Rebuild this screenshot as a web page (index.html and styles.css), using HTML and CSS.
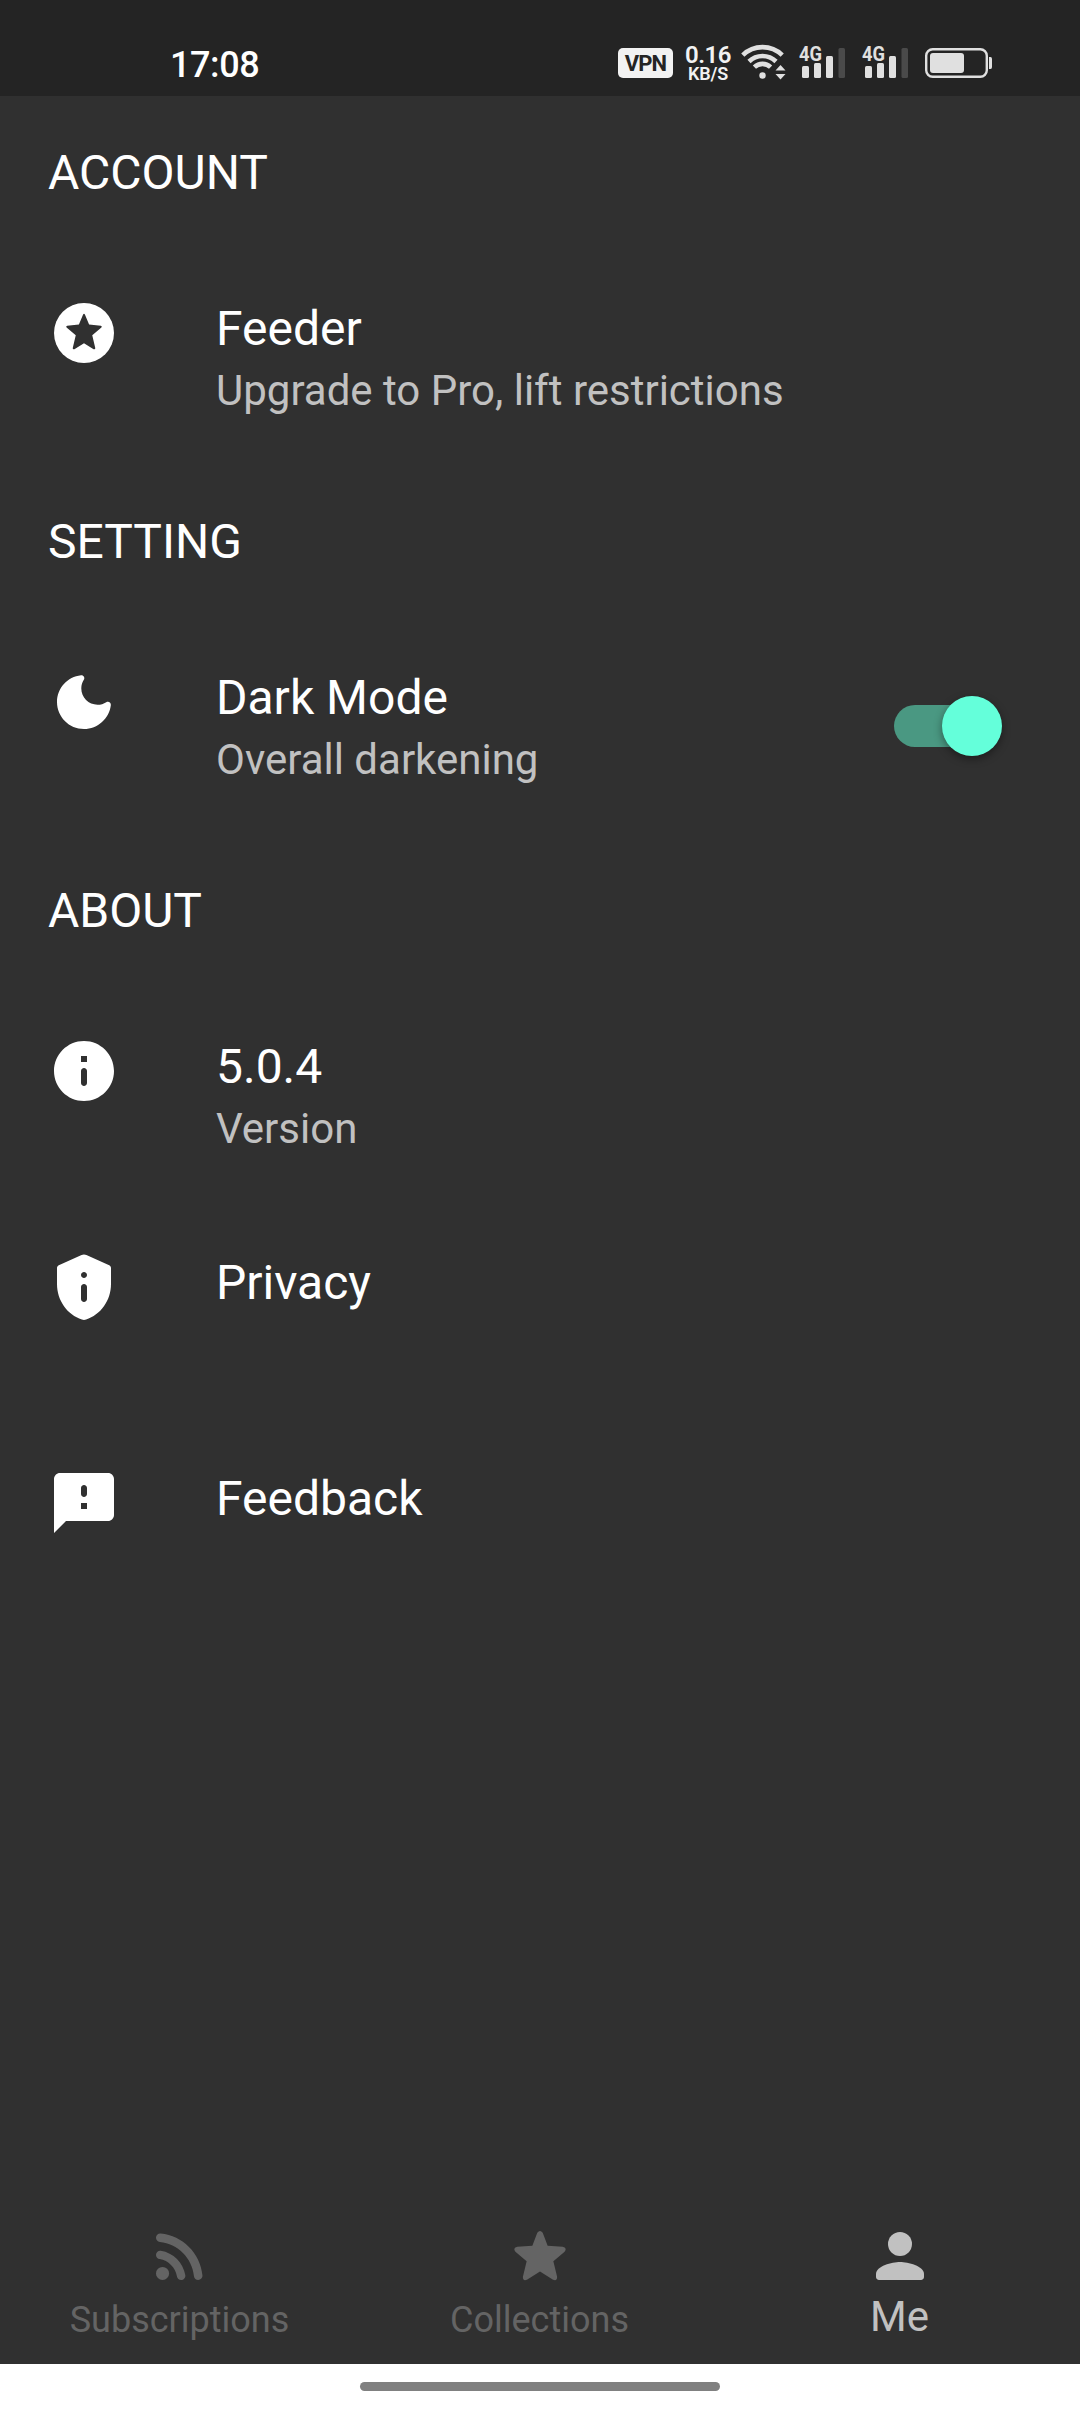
FILE: index.html
```html
<!DOCTYPE html>
<html lang="en">
<head>
<meta charset="utf-8">
<title>Feeder</title>
<link rel="stylesheet" href="styles.css">
</head>
<body>
<div class="screen">
  <header class="status">
    <span class="clock">17:08</span>
    <div class="indicators">
      <span class="vpn">VPN</span>
      <div class="speed"><span class="rate">0.16</span><span class="unit">KB/S</span></div>
      <svg class="wifi" width="46" height="40" viewBox="0 0 46 40">
        <g fill="none" stroke="#e0e0e0" stroke-width="4.600">
          <path d="M1.800 12.100A28.300 28.300 0 0 1 41.200 12.100"/>
          <path d="M8 18.500A19.500 19.500 0 0 1 35 18.500"/>
          <path d="M13.400 24.100A11.700 11.700 0 0 1 29.600 24.100"/>
        </g>
        <circle cx="21.500" cy="32.500" r="3.200" fill="#e0e0e0"/>
        <path fill="#e0e0e0" d="M34.500 27.500l5-5.500 5 5.500zM34.500 31h10l-5 5.500z"/>
      </svg>
      <svg class="signal" width="48" height="40" viewBox="0 0 48 40">
        <text class="net" x="0" y="18" textLength="23" lengthAdjust="spacingAndGlyphs">4G</text>
        <g fill="#e0e0e0">
          <rect x="3" y="23" width="7" height="12" rx="1.500"/>
          <rect x="15" y="20" width="7" height="15" rx="1.500"/>
          <rect x="27" y="13" width="7" height="22" rx="1.500"/>
        </g>
        <rect x="39.500" y="5" width="6.500" height="30" rx="1.500" fill="#4a4a4a"/>
      </svg>
      <svg class="signal second" width="48" height="40" viewBox="0 0 48 40">
        <text class="net" x="0" y="18" textLength="23" lengthAdjust="spacingAndGlyphs">4G</text>
        <g fill="#e0e0e0">
          <rect x="3" y="23" width="7" height="12" rx="1.500"/>
          <rect x="15" y="20" width="7" height="15" rx="1.500"/>
          <rect x="27" y="13" width="7" height="22" rx="1.500"/>
        </g>
        <rect x="39.500" y="5" width="6.500" height="30" rx="1.500" fill="#4a4a4a"/>
      </svg>
      <svg class="battery" width="68" height="40" viewBox="0 0 68 40">
        <rect x="2.200" y="6.200" width="60.600" height="27.600" rx="6.500" fill="none" stroke="#e0e0e0" stroke-width="2.400"/>
        <rect x="6" y="10" width="34" height="20" rx="3" fill="#e0e0e0"/>
        <path d="M65 14h1.500q1.500 0 1.500 2v8q0 2-1.500 2h-1.500z" fill="#e0e0e0"/>
      </svg>
    </div>
  </header>

  <main class="settings">
    <h2 class="heading">ACCOUNT</h2>
    <div class="item">
      <svg class="icon" viewBox="0 0 24 24"><circle cx="12" cy="12" r="10"/><path class="cutout" d="M11.700 5.850Q12 5.300 12.300 5.850L13.700 9.200 17.600 9.550Q18.200 9.700 17.800 10.200L14.750 12.750 15.750 17Q15.800 17.600 15.200 17.400L12 15.400 8.800 17.400Q8.200 17.600 8.250 17L9.250 12.750 6.200 10.200Q5.800 9.700 6.400 9.550L10.300 9.200z"/></svg>
      <div class="copy"><div class="title">Feeder</div><div class="detail">Upgrade to Pro, lift restrictions</div></div>
    </div>

    <h2 class="heading">SETTING</h2>
    <div class="item">
      <svg class="icon" viewBox="0 0 24 24"><path d="M11.010 3.050C6.510 3.540 3 7.360 3 12c0 4.970 4.030 9 9 9 4.630 0 8.450-3.500 8.950-8 .09-.79-.78-1.420-1.540-.95-.84.54-1.840.85-2.910.85-2.980 0-5.400-2.420-5.400-5.400 0-1.060.31-2.060.84-2.890.45-.67-.04-1.630-.93-1.560z"/></svg>
      <div class="copy"><div class="title">Dark Mode</div><div class="detail">Overall darkening</div></div>
      <div class="switch"><div class="thumb"></div></div>
    </div>

    <h2 class="heading">ABOUT</h2>
    <div class="item">
      <svg class="icon" viewBox="0 0 24 24"><path fill-rule="evenodd" d="M12 2C6.480 2 2 6.480 2 12s4.480 10 10 10 10-4.480 10-10S17.520 2 12 2zm0 15c-.55 0-1-.45-1-1v-4c0-.55.45-1 1-1s1 .45 1 1v4c0 .55-.45 1-1 1zm1-8h-2V7h2v2z"/></svg>
      <div class="copy"><div class="title">5.0.4</div><div class="detail">Version</div></div>
    </div>
    <div class="item">
      <svg class="icon" viewBox="0 0 24 24"><path fill-rule="evenodd" d="M3.600 4.730C3.200 4.920 3 5.300 3 5.700V11c0 5.550 3.500 10.300 8.300 11.850q.7.230 1.400 0C17.500 21.300 21 16.550 21 11V5.700c0-.4-.2-.78-.6-.97l-7.590-3.370c-.52-.23-1.110-.23-1.620 0zM12 7c.55 0 1 .45 1 1s-.45 1-1 1-1-.45-1-1 .45-1 1-1zm0 4c.55 0 1 .45 1 1v4c0 .55-.45 1-1 1s-1-.45-1-1v-4c0-.55.45-1 1-1z"/></svg>
      <div class="copy"><div class="title">Privacy</div></div>
    </div>
    <div class="item">
      <svg class="icon" viewBox="0 0 24 24"><path fill-rule="evenodd" d="M20 2H4c-1.100 0-2 .9-2 2v18l4-4h14c1.100 0 2-.9 2-2V4c0-1.100-.9-2-2-2zm-7 12h-2v-2h2v2zm0-5c0 .55-.45 1-1 1s-1-.45-1-1V7c0-.55.45-1 1-1s1 .45 1 1v2z"/></svg>
      <div class="copy"><div class="title">Feedback</div></div>
    </div>
  </main>

  <nav class="tabs">
    <div class="tab">
      <svg class="icon" viewBox="0 0 24 24"><circle cx="6.180" cy="17.820" r="2.180"/><path d="M5.590 10.230c-.84-.14-1.590.55-1.590 1.400 0 .71.53 1.280 1.230 1.400 2.920.51 5.220 2.820 5.740 5.740.12.7.69 1.230 1.400 1.230.85 0 1.540-.75 1.410-1.590-.68-4.200-3.990-7.510-8.190-8.180zm-.03-5.710C4.730 4.430 4 5.100 4 5.930c0 .73.55 1.330 1.270 1.400 6.010.6 10.790 5.380 11.390 11.390.07.73.67 1.280 1.400 1.280.84 0 1.500-.73 1.420-1.560-.73-7.340-6.570-13.190-13.920-13.920z"/></svg>
      <span class="label">Subscriptions</span>
    </div>
    <div class="tab">
      <svg class="icon" viewBox="0 0 24 24"><path d="M11.100 4.250Q12 3 12.900 4.250L14.550 8.550 19.550 8.900Q21.200 9.350 20.200 10.550L16.450 13.750 17.700 18.900Q17.750 20.450 16.350 19.900L12 17.200 7.650 19.900Q6.250 20.450 6.300 18.900L7.550 13.750 3.800 10.550Q2.800 9.350 4.450 8.900L9.450 8.550z"/></svg>
      <span class="label">Collections</span>
    </div>
    <div class="tab active">
      <svg class="icon" viewBox="0 0 24 24"><circle cx="12" cy="8" r="4"/><path d="M12 14c-2.670 0-8 1.340-8 4v1c0 .55.45 1 1 1h14c.55 0 1-.45 1-1v-1c0-2.660-5.330-4-8-4z"/></svg>
      <span class="label">Me</span>
    </div>
  </nav>
  <footer class="gesture"><div class="handle"></div></footer>
</div>
</body>
</html>
```
FILE: styles.css
```css
* { box-sizing: border-box; }
body { margin: 0; font-family: Roboto, sans-serif; background: #303030; }
.screen { display: flex; flex-direction: column; width: 1080px; height: 2412px; color: #fff; overflow: hidden; }

.status { flex: none; height: 96px; padding: 43px 88px 0 170px; display: flex; justify-content: space-between; align-items: flex-start; background: #242424; }
.clock { margin-top: 1px; font-size: 36px; line-height: 42px; font-weight: 500; letter-spacing: -.4px; }
.indicators { display: flex; }
.vpn { width: 55px; height: 30px; margin: 5px 12px 0 0; border-radius: 5px; background: #f2f2f2; color: #242424; font-size: 22px; line-height: 31px; font-weight: 700; letter-spacing: -.9px; text-align: center; }
.speed { width: 46px; height: 40px; margin-right: 10px; display: flex; flex-direction: column; align-items: center; color: #f2f2f2; font-weight: 600; }
.rate { height: 21px; font-size: 24px; line-height: 24px; letter-spacing: -.5px; }
.unit { height: 19px; font-size: 18px; line-height: 20px; letter-spacing: -.2px; }
.wifi { margin-right: 12px; }
.signal { margin-right: 15px; }
.signal.second { margin-right: 14px; }
.net { font-size: 21px; font-weight: 700; fill: #e0e0e0; }
.indicators svg { overflow: visible; }

.settings { flex: 1; }
.heading { margin: 0; height: 153px; padding: 49px 48px 0; font-size: 48px; line-height: 56px; font-weight: 400; }
.item { height: 216px; padding: 48px 78px 0 48px; display: flex; align-items: flex-start; }
.icon { flex: none; display: block; width: 72px; height: 72px; fill: currentColor; }
.cutout { fill: #303030; }
.copy { flex: 1; padding-top: 3px; margin-left: 96px; }
.title { font-size: 48px; line-height: 57px; }
.detail { margin-top: 9px; font-size: 42px; line-height: 49px; color: #c1c1c1; }
.switch { width: 102px; height: 42px; margin: 39px 6px 0 0; border-radius: 21px; background: #4a9882; display: flex; align-items: center; }
.thumb { flex: none; width: 60px; height: 60px; margin-left: 48px; border-radius: 50%; background: #64ffda; box-shadow: 0 3px 8px rgba(0, 0, 0, .4); }

.tabs { flex: none; height: 168px; display: grid; grid-template-columns: repeat(3, 1fr); padding-top: 24px; }
.tab { display: flex; flex-direction: column; align-items: center; color: #646464; }
.label { margin: 7px 1px 0 0; font-size: 36px; line-height: 42px; }
.tab.active { color: #c1c1c1; }
.active .label { margin-top: 0; font-size: 42px; line-height: 49px; }
.gesture { flex: none; height: 48px; padding-top: 18px; background: #fff; }
.handle { width: 360px; height: 9px; margin: 0 auto; border-radius: 5px; background: #808080; }
```
